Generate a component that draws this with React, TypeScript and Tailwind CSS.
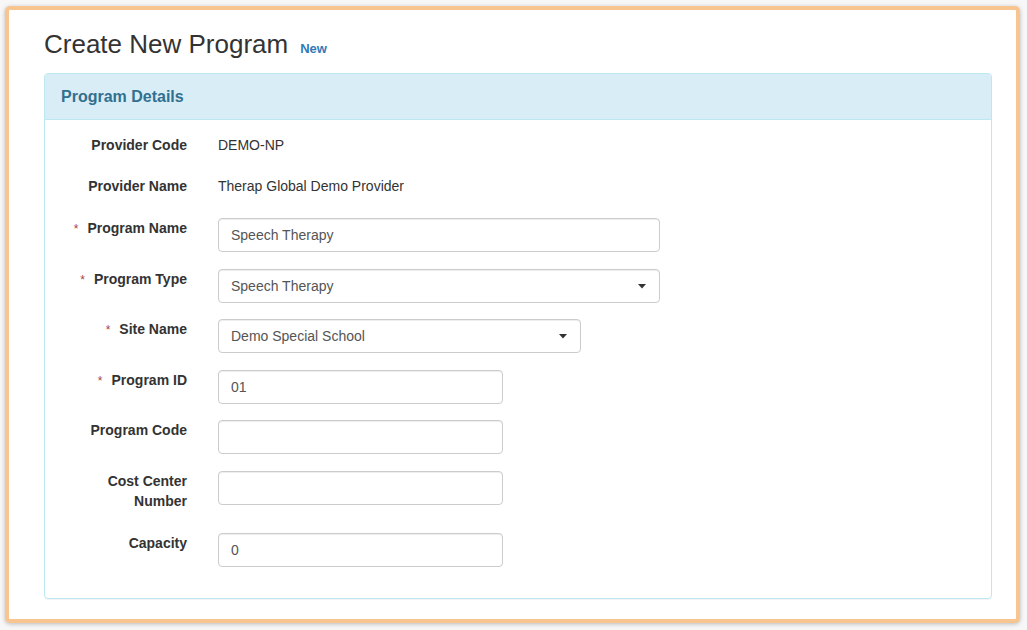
import React from 'react';

type Field = {
  label: string;
  lines?: string[];
  required?: boolean;
  kind: 'input' | 'select';
  value: string;
  width: string;
};

const fields: Field[] = [
  { label: 'Program Name', required: true, kind: 'input', value: 'Speech Therapy', width: 'w-[442px]' },
  { label: 'Program Type', required: true, kind: 'select', value: 'Speech Therapy', width: 'w-[442px]' },
  { label: 'Site Name', required: true, kind: 'select', value: 'Demo Special School', width: 'w-[363px]' },
  { label: 'Program ID', required: true, kind: 'input', value: '01', width: 'w-[285px]' },
  { label: 'Program Code', kind: 'input', value: '', width: 'w-[285px]' },
  { label: 'Cost Center Number', lines: ['Cost Center', 'Number'], kind: 'input', value: '', width: 'w-[285px]' },
  { label: 'Capacity', kind: 'input', value: '0', width: 'w-[285px]' },
];

const Caret = () => (
  <svg width="8" height="5" viewBox="0 0 8 5" className="absolute right-[14px] top-[15px]">
    <path d="M0 0 L8 0 L4 4.5 Z" fill="#333" />
  </svg>
);

const App: React.FC = () => {
  return (
    <div className="w-[1027px] h-[630px] bg-[#f7f7f7] pt-[6px] pl-[5px] font-['Liberation_Sans',Arial,sans-serif]">
      <div className="w-[1015px] h-[617px] bg-white border-4 border-[#f8c590] rounded-[5px] shadow-[0_1px_4px_rgba(0,0,0,0.25)] pl-[35px] pr-[24px]">
        <div className="flex items-baseline pt-[20px] h-[63px]">
          <h1 className="text-[26px] leading-[28px] text-[#333]">Create New Program</h1>
          <span className="ml-[12px] text-[13px] font-bold text-[#337ab7]">New</span>
        </div>

        <div className="w-[948px] h-[526px] border border-[#bce8f1] rounded-[4px] shadow-[0_1px_1px_rgba(0,0,0,0.05)]">
          <div className="h-[46px] bg-[#d9edf7] border-b border-[#bce8f1] rounded-t-[3px] pl-[16px] flex items-center">
            <h2 className="text-[16px] font-bold text-[#31708f]">Program Details</h2>
          </div>

          <div className="pt-[15px] text-[14px] leading-[20px] text-[#333]">
            <div className="flex mb-[21px]">
              <div className="w-[142px] text-right font-bold">Provider Code</div>
              <div className="ml-[31px]">DEMO-NP</div>
            </div>
            <div className="flex mb-[22px]">
              <div className="w-[142px] text-right font-bold">Provider Name</div>
              <div className="ml-[31px]">Therap Global Demo Provider</div>
            </div>

            {fields.map((f) => (
              <div key={f.label} className={`flex items-start ${f.lines ? 'mb-[22.5px]' : 'mb-[16.5px]'}`}>
                <div className="w-[142px] text-right font-bold">
                  {f.required && <span className="text-[#a94442] font-normal text-[12px] mr-[9px]">*</span>}
                  {f.lines ? (
                    <>
                      {f.lines[0]}
                      <br />
                      {f.lines[1]}
                    </>
                  ) : (
                    f.label
                  )}
                </div>
                <div className={`ml-[31px] relative ${f.width}`}>
                  <div className="h-[34px] border border-[#ccc] rounded-[4px] shadow-[inset_0_1px_1px_rgba(0,0,0,0.075)] px-[12px] flex items-center text-[#555]">
                    {f.value}
                  </div>
                  {f.kind === 'select' && <Caret />}
                </div>
              </div>
            ))}
          </div>
        </div>
      </div>
    </div>
  );
};

export default App;
